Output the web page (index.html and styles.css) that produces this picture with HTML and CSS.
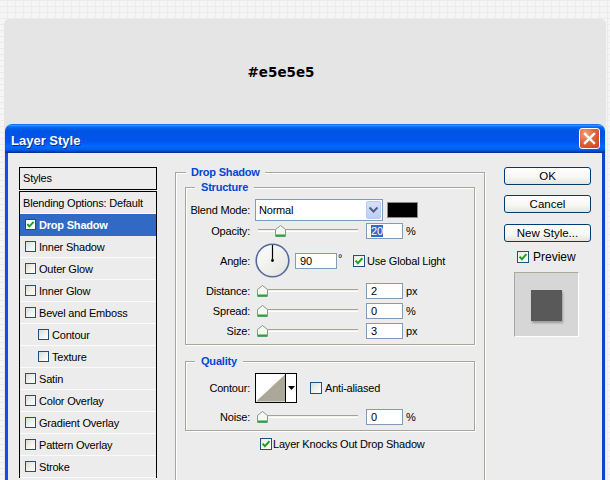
FILE: index.html
```html
<!DOCTYPE html>
<html lang="en">
<head>
<meta charset="utf-8">
<title>Layer Style</title>
<link rel="stylesheet" href="styles.css">
</head>
<body>
<div class="stage">
  <div class="swatch-label">#e5e5e5</div>
  <div class="dialog">
    <div class="titlebar">
      <span class="title">Layer Style</span>
      <span class="close"><svg width="13" height="13" viewBox="0 0 13 13"><path d="M2 2 L11 11 M11 2 L2 11" stroke="#fff" stroke-width="2.4" stroke-linecap="square"/></svg></span>
    </div>
    <div class="dialog-body">
      <div class="styles-panel">
        <div class="styles-head">Styles</div>
        <ul class="styles-list">
          <li class="item plain">Blending Options: Default</li>
          <li class="item selected"><span class="cb cb-sm checked"><svg width="9" height="9" viewBox="0 0 9 9"><path d="M1.3 4 L3.4 6.4 L7.6 1.8" stroke="#21a121" stroke-width="1.9" fill="none"/></svg></span>Drop Shadow</li>
          <li class="item"><span class="cb cb-sm"></span>Inner Shadow</li>
          <li class="item"><span class="cb cb-sm"></span>Outer Glow</li>
          <li class="item"><span class="cb cb-sm"></span>Inner Glow</li>
          <li class="item"><span class="cb cb-sm"></span>Bevel and Emboss</li>
          <li class="item sub"><span class="cb cb-sm"></span>Contour</li>
          <li class="item sub"><span class="cb cb-sm"></span>Texture</li>
          <li class="item"><span class="cb cb-sm"></span>Satin</li>
          <li class="item"><span class="cb cb-sm"></span>Color Overlay</li>
          <li class="item"><span class="cb cb-sm"></span>Gradient Overlay</li>
          <li class="item"><span class="cb cb-sm"></span>Pattern Overlay</li>
          <li class="item"><span class="cb cb-sm"></span>Stroke</li>
        </ul>
      </div>

      <fieldset class="group outer">
        <legend>Drop Shadow</legend>
        <fieldset class="group inner structure">
          <legend>Structure</legend>
          <div class="row r-blend">
            <span class="lbl">Blend Mode:</span>
            <div class="select"><span class="select-text">Normal</span><span class="select-btn"><svg width="11" height="8" viewBox="0 0 11 8"><path d="M1.5 1.5 L5.5 5.5 L9.5 1.5" stroke="#4d6185" stroke-width="2" fill="none"/></svg></span></div>
            <span class="color-swatch"></span>
          </div>
          <div class="row r-opacity">
            <span class="lbl">Opacity:</span>
            <div class="slider"><div class="track"></div><svg class="thumb" style="left:20px" width="11" height="12" viewBox="0 0 11 12"><path d="M.5 4.5 L5.5 .5 L10.5 4.5 V11.5 H.5Z" fill="#f6f6f2" stroke="#7e9f84"/><rect x="1" y="9.5" width="9" height="2" fill="#26a63a"/></svg></div>
            <span class="field"><span class="sel">20</span></span><span class="unit">%</span>
          </div>
          <div class="row r-angle">
            <span class="lbl">Angle:</span>
            <svg class="dial" width="35" height="35" viewBox="0 0 35 35"><defs><linearGradient id="dg" x1="0" y1="0" x2="1" y2="1"><stop offset="0" stop-color="#ffffff"/><stop offset="1" stop-color="#e2e2dc"/></linearGradient></defs><circle cx="17.5" cy="17.5" r="16.3" fill="url(#dg)" stroke="#56699a" stroke-width="1.6"/><path d="M17.5 17.5 V2" stroke="#000" stroke-width="1.2"/><circle cx="17.5" cy="17.5" r="1.4" fill="#000"/></svg>
            <span class="field field-angle">90</span><span class="deg">°</span>
            <span class="cb checked"><svg width="10" height="10" viewBox="0 0 10 10"><path d="M1.6 4.6 L3.9 7.2 L8.4 2.2" stroke="#21a121" stroke-width="2" fill="none"/></svg></span><span class="cb-text">Use Global Light</span>
          </div>
          <div class="row r-slider">
            <span class="lbl">Distance:</span>
            <div class="slider"><div class="track"></div><svg class="thumb" style="left:2px" width="11" height="12" viewBox="0 0 11 12"><path d="M.5 4.5 L5.5 .5 L10.5 4.5 V11.5 H.5Z" fill="#f6f6f2" stroke="#7e9f84"/><rect x="1" y="9.5" width="9" height="2" fill="#26a63a"/></svg></div>
            <span class="field">2</span><span class="unit">px</span>
          </div>
          <div class="row r-slider">
            <span class="lbl">Spread:</span>
            <div class="slider"><div class="track"></div><svg class="thumb" style="left:2px" width="11" height="12" viewBox="0 0 11 12"><path d="M.5 4.5 L5.5 .5 L10.5 4.5 V11.5 H.5Z" fill="#f6f6f2" stroke="#7e9f84"/><rect x="1" y="9.5" width="9" height="2" fill="#26a63a"/></svg></div>
            <span class="field">0</span><span class="unit">%</span>
          </div>
          <div class="row r-slider">
            <span class="lbl">Size:</span>
            <div class="slider"><div class="track"></div><svg class="thumb" style="left:2px" width="11" height="12" viewBox="0 0 11 12"><path d="M.5 4.5 L5.5 .5 L10.5 4.5 V11.5 H.5Z" fill="#f6f6f2" stroke="#7e9f84"/><rect x="1" y="9.5" width="9" height="2" fill="#26a63a"/></svg></div>
            <span class="field">3</span><span class="unit">px</span>
          </div>
        </fieldset>

        <fieldset class="group inner quality">
          <legend>Quality</legend>
          <div class="row r-contour">
            <span class="lbl">Contour:</span>
            <div class="contour">
              <svg class="curve" width="30" height="28" viewBox="0 0 30 28"><rect width="30" height="28" fill="#fff"/><path d="M0 28 L30 0 V28 Z" fill="#aca899"/></svg>
              <span class="contour-arrow"><svg width="7" height="4" viewBox="0 0 7 4"><path d="M0 0 H7 L3.5 4 Z" fill="#000"/></svg></span>
            </div>
            <span class="cb cb-aa"></span><span class="cb-text aa-text">Anti-aliased</span>
          </div>
          <div class="row r-slider r-noise">
            <span class="lbl">Noise:</span>
            <div class="slider"><div class="track"></div><svg class="thumb" style="left:2px" width="11" height="12" viewBox="0 0 11 12"><path d="M.5 4.5 L5.5 .5 L10.5 4.5 V11.5 H.5Z" fill="#f6f6f2" stroke="#7e9f84"/><rect x="1" y="9.5" width="9" height="2" fill="#26a63a"/></svg></div>
            <span class="field">0</span><span class="unit">%</span>
          </div>
        </fieldset>

        <div class="knock">
          <span class="cb checked"><svg width="10" height="10" viewBox="0 0 10 10"><path d="M1.6 4.6 L3.9 7.2 L8.4 2.2" stroke="#21a121" stroke-width="2" fill="none"/></svg></span><span class="knock-text">Layer Knocks Out Drop Shadow</span>
        </div>
      </fieldset>

      <div class="side">
        <button class="btn">OK</button>
        <button class="btn">Cancel</button>
        <button class="btn btn-new">New Style...</button>
        <div class="preview-check">
          <span class="cb checked"><svg width="10" height="10" viewBox="0 0 10 10"><path d="M1.6 4.6 L3.9 7.2 L8.4 2.2" stroke="#21a121" stroke-width="2" fill="none"/></svg></span><span class="preview-text">Preview</span>
        </div>
        <div class="preview-box"><div class="preview-swatch"></div></div>
      </div>
    </div>
  </div>
</div>
</body>
</html>
```
FILE: styles.css
```css
* { box-sizing: border-box; }

html, body {
  margin: 0;
  height: 480px;
  overflow: hidden;
}

body {
  padding-top: 19px;
  background-color: #f5f5f5;
  background-image:
    repeating-linear-gradient(90deg, rgba(0,0,0,0) 0 7px, #ebebeb 7px 8px),
    repeating-linear-gradient(0deg, rgba(0,0,0,0) 0 5px, #ebebeb 5px 6px);
  font-family: "Liberation Sans", Arial, sans-serif;
  font-size: 11px;
  letter-spacing: -0.2px;
  color: #000;
}

.stage {
  margin: 0 4px;
  padding: 0 1px;
  height: 461px;
  overflow: hidden;
  background: #e5e5e5;
  border-radius: 5px 5px 0 0;
}

.swatch-label {
  height: 105px;
  display: flex;
  align-items: center;
  justify-content: center;
  padding-right: 48px;
  font-family: "DejaVu Sans", sans-serif;
  font-weight: bold;
  font-size: 13.5px;
  letter-spacing: 0;
  color: #000;
}

/* ---------- dialog chrome ---------- */
.titlebar {
  height: 29px;
  display: flex;
  align-items: center;
  justify-content: space-between;
  padding: 0 5px 0 6px;
  border-radius: 7px 7px 0 0;
  background: linear-gradient(to bottom,
    #0058ee 0%, #3593ff 4%, #288eff 6%, #127dff 8%, #036ffc 10%,
    #0262ee 14%, #0057e5 20%, #0054e3 24%, #0055eb 56%, #005bf5 66%,
    #026afe 76%, #0062ef 86%, #0052d6 92%, #0040ab 96%, #003092 100%);
}

.title {
  color: #fff;
  font-weight: bold;
  font-size: 13px;
  letter-spacing: 0;
  padding-top: 3px;
  text-shadow: 1px 1px 0 #0a2a8e;
}

.close {
  width: 21px;
  height: 21px;
  display: flex;
  align-items: center;
  justify-content: center;
  border: 1px solid #fff;
  border-radius: 3px;
  background: radial-gradient(circle at 30% 25%, #f0a283 0%, #e2633b 45%, #c9401a 100%);
}

.dialog-body {
  display: flex;
  align-items: flex-start;
  height: 327px;
  overflow: hidden;
  padding: 14px 0 0 11px;
  background: #ececec;
  border-left: 3px solid #0d50e4;
  border-right: 3px solid #0b45d4;
}

/* ---------- checkboxes ---------- */
.cb {
  width: 12px;
  height: 12px;
  flex: none;
  display: inline-flex;
  align-items: center;
  justify-content: center;
  border: 1px solid #1c5180;
  background: linear-gradient(135deg, #dcdcd6 0%, #f3f3f0 60%, #ffffff 100%);
}

.cb-sm {
  width: 11px;
  height: 11px;
  margin-right: 3px;
}

.cb.checked { background: linear-gradient(135deg, #e8e8e4 0%, #fafaf8 60%, #ffffff 100%); }

.cb-text { margin-left: 2px; }

/* ---------- styles list ---------- */
.styles-panel {
  width: 138px;
  flex: none;
}

.styles-head {
  height: 23px;
  line-height: 21px;
  padding-left: 3px;
  border: 1px solid #000;
}

.styles-list {
  list-style: none;
  margin: 1px 0 0;
  padding: 0;
  border: 1px solid #000;
  border-bottom: none;
}

.item {
  height: 22px;
  display: flex;
  align-items: center;
  padding-left: 5px;
  border-bottom: 1px solid #fbfbfb;
  white-space: nowrap;
}

.item.plain { padding-left: 3px; }
.item.sub { padding-left: 18px; }

.item.selected {
  background: #316ac5;
  color: #fff;
  font-weight: bold;
  border-bottom-color: #316ac5;
}

.item.selected .cb { background: #fff; }

/* ---------- group boxes ---------- */
.group {
  margin: 0;
  padding: 0;
  min-width: 0;
  border: 1px solid #a7a698;
  box-shadow: 1px 1px 0 #fff, inset 1px 1px 0 #fff;
}

.group > legend {
  margin-left: 9px;
  padding: 0 6px;
  line-height: 12px;
  font-weight: bold;
  color: #0046d5;
  background: #ececec;
}

.outer {
  width: 310px;
  height: 340px;
  flex: none;
  margin: -1px 0 0 18px;
  padding: 3px 9px 0;
}

.outer > legend {
  margin-left: 1px;
  padding: 0 5px;
}

.structure { padding: 6px 0 3px; }

.quality {
  margin-top: 10px;
  padding: 6px 0 3px;
}

/* ---------- rows ---------- */
.row {
  display: flex;
  align-items: center;
}

.lbl {
  width: 64px;
  flex: none;
  margin-right: 5px;
  text-align: right;
}

.r-blend { height: 22px; }
.r-opacity { height: 19px; }
.r-angle { height: 41px; }
.r-slider { height: 20px; }
.r-contour { height: 30px; }
.r-noise { margin-top: 4px; }

.select {
  width: 128px;
  height: 22px;
  flex: none;
  display: flex;
  align-items: center;
  justify-content: space-between;
  padding: 1px 1px 1px 3px;
  border: 1px solid #7f9db9;
  background: #fff;
}

.select-btn {
  width: 15px;
  height: 18px;
  display: flex;
  align-items: center;
  justify-content: center;
  border: 1px solid #b9cbf5;
  border-radius: 2px;
  background: linear-gradient(to bottom, #d6e1fb, #bccdf6);
}

.color-swatch {
  width: 31px;
  height: 16px;
  margin-left: 4px;
  flex: none;
  background: #000;
  border: 1px solid #8a8a8a;
}

.slider {
  position: relative;
  width: 111px;
  height: 14px;
  flex: none;
  padding: 5px 0 0 3px;
}

.track {
  width: 100px;
  height: 3px;
  background: #f2f1e8;
  border-top: 1px solid #a3a295;
  border-bottom: 1px solid #fff;
}

.thumb {
  position: absolute;
  top: 1px;
}

.field {
  width: 37px;
  height: 16px;
  flex: none;
  padding-left: 4px;
  line-height: 14px;
  border: 1px solid #7f9db9;
  background: #fff;
}

.field .sel {
  background: #316ac5;
  color: #fff;
}

.unit { margin-left: 3px; }

.dial { flex: none; }

.field-angle {
  width: 42px;
  margin-left: 5px;
}

.deg {
  width: 16px;
  flex: none;
  padding-left: 1px;
  align-self: flex-start;
  margin-top: 12px;
}

/* ---------- quality ---------- */
.contour {
  width: 42px;
  height: 30px;
  flex: none;
  display: flex;
  border: 1px solid #000;
  background: #fff;
}

.curve {
  display: block;
  border-right: 1px solid #000;
}

.contour-arrow {
  flex: 1;
  display: flex;
  align-items: center;
  justify-content: center;
}

.cb-aa { margin-left: 13px; }
.aa-text { margin-left: 3px; }

.knock {
  display: flex;
  align-items: center;
  height: 12px;
  margin-top: 7px;
  padding-left: 75px;
}

.knock-text { margin-left: 1px; }

/* ---------- side buttons ---------- */
.side {
  width: 87px;
  flex: none;
  margin-left: 19px;
}

.btn {
  display: block;
  width: 87px;
  height: 18px;
  padding: 0;
  border: 1px solid #003c74;
  border-radius: 3px;
  background: linear-gradient(to bottom, #ffffff 0%, #f6f6f3 60%, #e6e4da 100%);
  font-family: "Liberation Sans", Arial, sans-serif;
  font-size: 11.5px;
  color: #000;
}

.btn + .btn { margin-top: 10px; }
.btn-new { margin-top: 11px !important; }

.preview-check {
  display: flex;
  align-items: center;
  margin: 8px 0 0 13px;
}

.preview-text {
  margin-left: 4px;
  font-size: 12px;
  letter-spacing: 0;
}

.preview-box {
  width: 65px;
  height: 65px;
  margin: 8px 0 0 10px;
  padding: 17px 0 0 16px;
  background: #d6d6d6;
  border: 1px solid;
  border-color: #aca899 #fff #fff #aca899;
}

.preview-swatch {
  width: 31px;
  height: 31px;
  background: #595959;
  box-shadow: 1px 2px 2px rgba(0,0,0,0.28);
}
```
